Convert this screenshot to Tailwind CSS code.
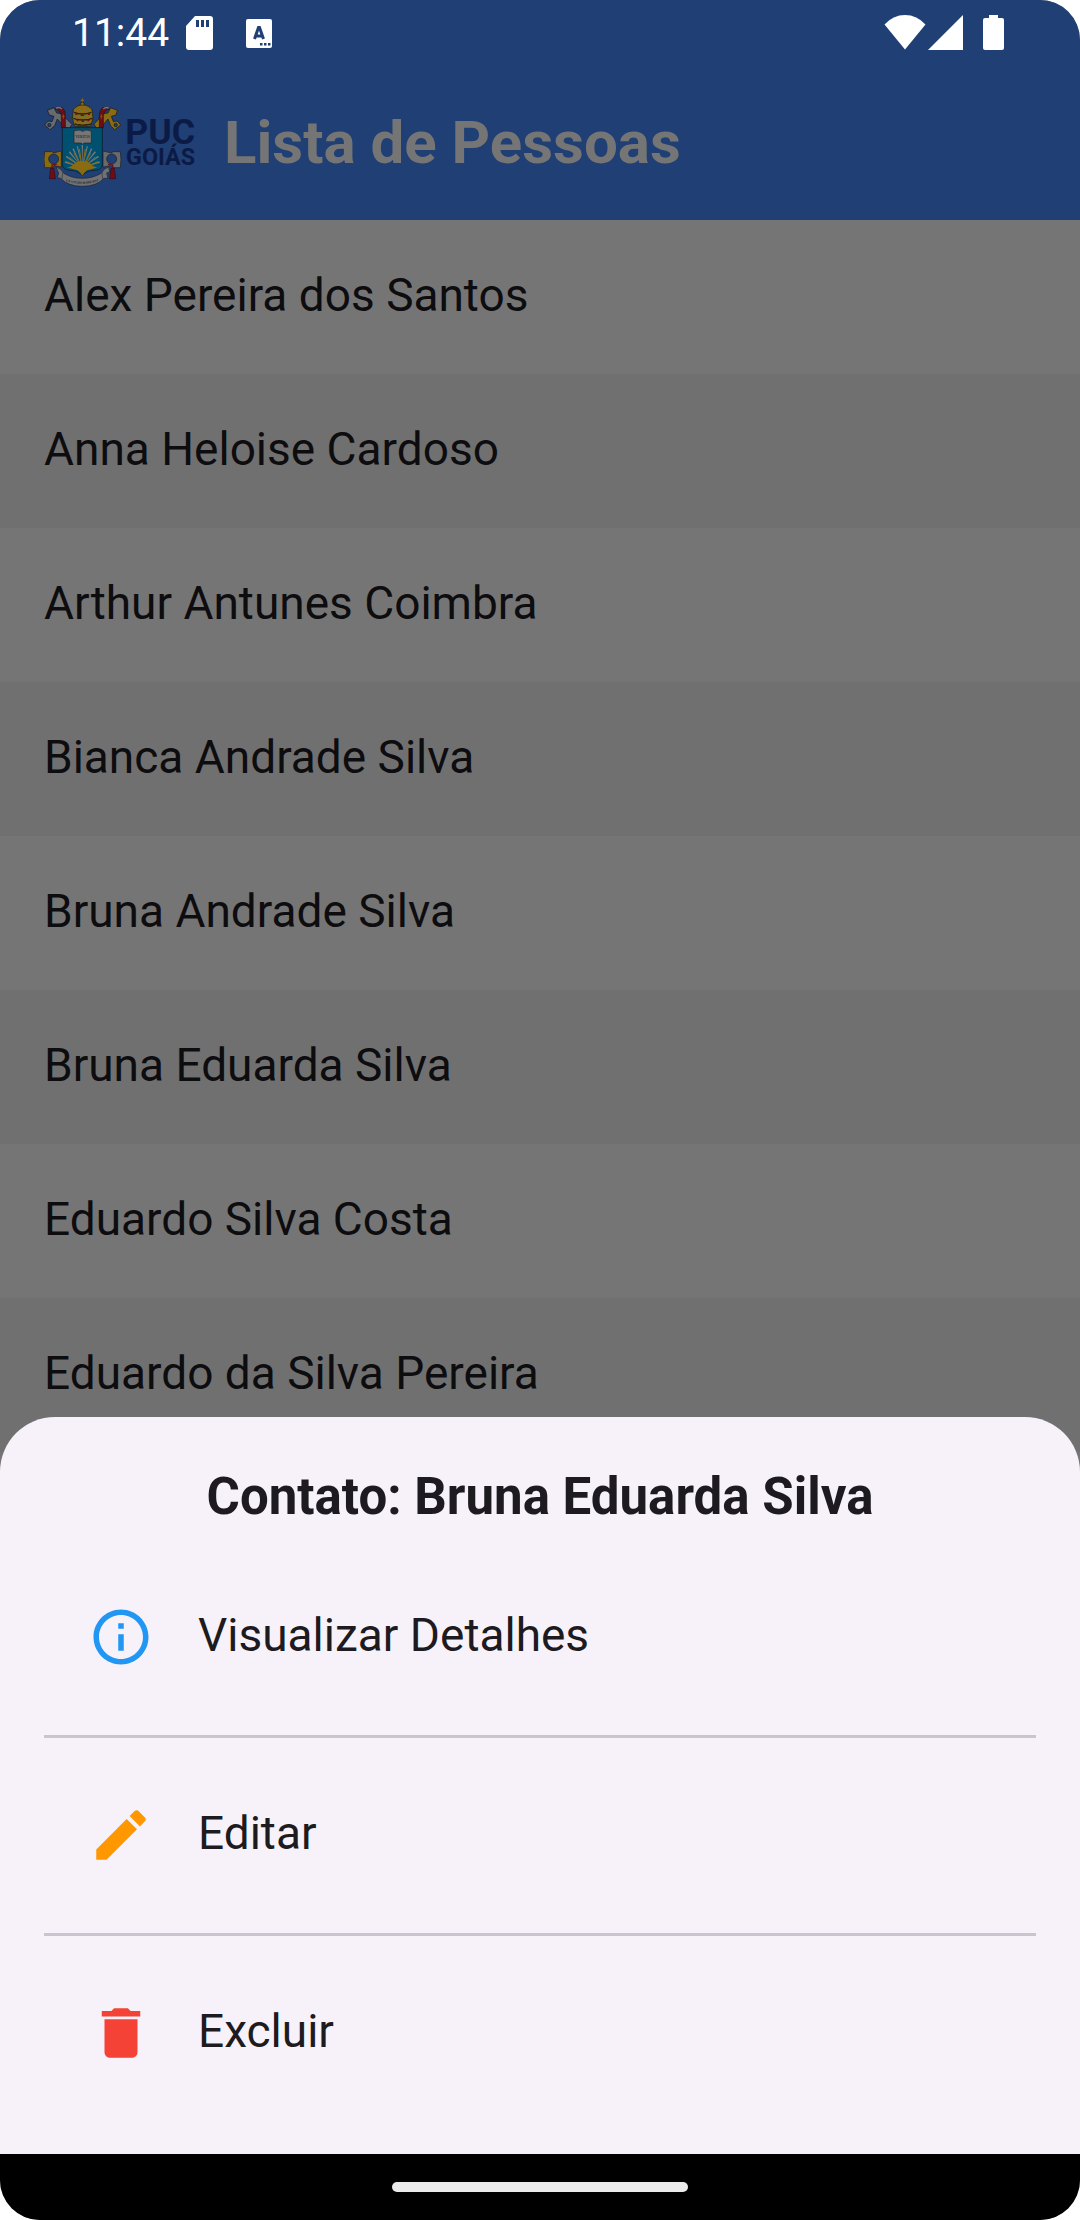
<!DOCTYPE html>
<html lang="pt-BR">
<head>
<meta charset="utf-8">
<meta name="viewport" content="width=device-width, initial-scale=1">
<title>Lista de Pessoas</title>
<script src="https://cdn.jsdelivr.net/npm/@tailwindcss/browser@4"></script>
</head>
<body class="bg-white font-['Roboto',sans-serif]">
<div class="relative flex min-h-screen flex-col overflow-hidden rounded-[40px] bg-[#757575]">

  <header class="bg-[#1f3f75]">
    <!-- Status bar -->
    <div class="flex h-[66px] items-center justify-between pl-[72px] pr-[76px] text-white">
      <div class="flex items-center">
        <time class="text-[39px] leading-none">11:44</time>
        <svg class="ml-4 h-9 w-7" viewBox="0 0 28 36" fill="currentColor" aria-hidden="true"><path fill-rule="evenodd" d="M10 1H25Q28 1 28 4V32Q28 35 25 35H4Q1 35 1 32V11ZM11 5V12H14V5ZM16 5V12H19V5ZM21 5V12H24V5Z"/></svg>
        <svg class="ml-8 h-9 w-7" viewBox="0 0 28 36" aria-hidden="true"><rect x="1" y="4" width="26" height="29" rx="2" fill="currentColor"/><path d="M9.500 24L13.500 12.500H14.500L18.500 24M11 21H17" fill="none" stroke="#1f3f75" stroke-width="3"/><path d="M15 28h2.500v2.500H15zM19 28h2.500v2.500H19zM23 28h2.500v2.500H23z" fill="#1f3f75"/></svg>
      </div>
      <div class="flex items-center">
        <svg class="h-9 w-[42px]" viewBox="0 0 42 36" fill="currentColor" aria-hidden="true"><path d="M21 34.500L.5 9.500Q9 0 21 0T41.500 9.500Z"/></svg>
        <svg class="ml-0.5 h-9 w-[35px]" viewBox="0 0 35 36" fill="currentColor" aria-hidden="true"><path d="M0 35L35 0V35Z"/></svg>
        <svg class="ml-5 h-9 w-[21px]" viewBox="0 0 21 36" fill="currentColor" aria-hidden="true"><path d="M6 0H15V3H19Q21 3 21 5V33Q21 35 19 35H2Q0 35 0 33V5Q0 3 2 3H6Z"/></svg>
      </div>
    </div>

    <!-- App bar -->
    <div class="flex h-[154px] items-center gap-7 px-11">
      <svg class="h-[90px] w-[152px] shrink-0" viewBox="42 39 456 270" role="img" aria-label="PUC Goiás">
        <!-- Crossed keys -->
        <g stroke="#171717" stroke-width="2">
          <path d="M52 76L72 68L80 84L94 86L126 118L118 130L104 126L82 102L74 122L60 134L44 120L54 108L66 110L72 94L58 90Z" fill="#686a6d"/>
          <path d="M262 76L242 68L234 84L220 86L192 118L200 130L214 126L234 102L242 122L254 134L272 120L262 108L250 110L244 94L258 90Z" fill="#8b6b12"/>
          <circle cx="58" cy="120" r="5" fill="#1f3f75"/><circle cx="257" cy="120" r="5" fill="#1f3f75"/>
        </g>
        <!-- Ribbons -->
        <path d="M76 72Q86 62 97 68Q106 74 106 92V128H94V92Q92 78 76 72Z" fill="#6e0d16" stroke="#16191d" stroke-width="2"/>
        <path d="M238 72Q230 62 218 68Q208 74 208 92V128H220V92Q222 78 238 72Z" fill="#6e0d16" stroke="#16191d" stroke-width="2"/>
        <path d="M78 70Q88 64 96 72M236 70Q228 64 220 72" fill="none" stroke="#777" stroke-width="4"/>
        <path d="M100 88v14M96 94h8M214 88v14M210 94h8" stroke="#8b6b12" stroke-width="2"/>
        <!-- Tiara -->
        <path d="M157 40V56M152 46H162" stroke="#8b6b12" stroke-width="3"/>
        <circle cx="157" cy="58" r="6" fill="#8b6b12" stroke="#20180a" stroke-width="2"/>
        <path d="M130 74Q140 60 158 60T186 74L189 100L182 124H134L127 100Z" fill="#8b6b12" stroke="#20180a" stroke-width="2"/>
        <path d="M132 82Q158 92 184 82M130 100Q158 110 188 100M134 117Q158 124 183 117" fill="none" stroke="#2b2009" stroke-width="4"/>
        <path d="M134 75l6 5 7-8 9 9 9-9 7 8 8-5M132 94l8 6 8-8 9 9 9-9 8 8 10-6M136 112l8 5 8-7 6 7 8-7 7 7 8-5" fill="none" stroke="#777149" stroke-width="3"/>
        <path d="M136 88h6M152 91h10M174 88h6M140 107h5M155 109h7M172 107h6" stroke="#6e0d16" stroke-width="4"/>
        <!-- Side rings -->
        <g stroke="#20201d" stroke-width="2">
          <path d="M44 200H66L70 204L94 198V246L72 242L68 248H44L42 224Z" fill="#8b6b12"/>
          <path d="M271 200H249L245 204L219 198V246L243 242L247 248H271L273 224Z" fill="#686a6d"/>
          <circle cx="71" cy="222" r="15" fill="#1f3f75"/><circle cx="245" cy="222" r="15" fill="#1f3f75"/>
        </g>
        <!-- Shield -->
        <path d="M97 128H217V240Q215 254 196 256Q169 256 157 272Q145 256 118 256Q99 254 97 240Z" fill="#00506f" stroke="#0c1822" stroke-width="2"/>
        <!-- Rays -->
        <path d="M157 248L155 180L159 180ZM157 248L140 184L144 184ZM157 248L170 184L174 184ZM157 248L127 192L131 190ZM157 248L183 190L187 192ZM157 248L116 202L120 199ZM157 248L194 199L198 202ZM157 248L107 216L110 212ZM157 248L204 212L207 216ZM157 248L104 233L106 229ZM157 248L208 229L210 233Z" fill="#777"/>
        <path d="M157 250L148 192M157 250L166 192M157 250L132 204M157 250L182 204M157 250L118 216M157 250L196 216M157 250L110 230M157 250L204 230" stroke="#8b6b12" stroke-width="3"/>
        <path d="M111 247Q124 246 128 240Q140 228 157 228T186 240Q190 246 203 247Q181 254 171 256Q162 263 157 272Q152 263 143 256Q133 254 111 247Z" fill="#8b6b12"/>
        <!-- Book -->
        <path d="M132 138Q148 132 158 139Q168 132 184 138V174H162L158 178L154 174H132Z" fill="#747678" stroke="#222" stroke-width="2"/>
        <text x="158" y="158" text-anchor="middle" font-family="Liberation Serif, serif" font-size="10" font-weight="700" fill="#303030">VERITAS</text>
        <!-- Banner and tassels -->
        <path d="M78 246Q94 250 100 264Q124 280 157 280T215 264Q220 250 236 246L239 260L230 264L234 280L222 280Q200 304 157 304T92 280L82 278L86 264Z" fill="#707174" stroke="#20252b" stroke-width="2"/>
        <path d="M98 264L96 282M216 264L218 282" stroke="#333" stroke-width="2"/>
        <path id="motto" d="M106 288Q156 306 208 287" fill="none"/>
        <text font-family="Liberation Serif, serif" font-size="10" font-weight="700" fill="#252525"><textPath href="#motto" startOffset="50%" text-anchor="middle">UT VITAM HABEANT</textPath></text>
        <path d="M80 238L66 240V258M234 238L248 240V258" fill="none" stroke="#6e0d16" stroke-width="4"/>
        <path d="M62 250H72L76 281H58ZM243 250H253L257 281H239Z" fill="#6e0d16" stroke="#330d18" stroke-width="2"/>
        <!-- Wordmark -->
        <g font-family="Roboto, sans-serif" font-weight="700" fill="#0c1b45">
          <text x="286" y="177" font-size="107">PUC</text>
          <text x="288" y="239" font-size="70">GOIÁS</text>
        </g>
      </svg>
      <h1 class="text-[60px] font-bold leading-none text-[#757575]">Lista de Pessoas</h1>
    </div>
  </header>

  <main>
    <ul class="text-[46px] text-[#0d0c0f]">
      <li class="bg-[#757575]"><button class="h-[154px] w-full px-11 pb-1 text-left">Alex Pereira dos Santos</button></li>
      <li class="bg-[#707070]"><button class="h-[154px] w-full px-11 pb-1 text-left">Anna Heloise Cardoso</button></li>
      <li class="bg-[#757575]"><button class="h-[154px] w-full px-11 pb-1 text-left">Arthur Antunes Coimbra</button></li>
      <li class="bg-[#707070]"><button class="h-[154px] w-full px-11 pb-1 text-left">Bianca Andrade Silva</button></li>
      <li class="bg-[#757575]"><button class="h-[154px] w-full px-11 pb-1 text-left">Bruna Andrade Silva</button></li>
      <li class="bg-[#707070]"><button class="h-[154px] w-full px-11 pb-1 text-left">Bruna Eduarda Silva</button></li>
      <li class="bg-[#757575]"><button class="h-[154px] w-full px-11 pb-1 text-left">Eduardo Silva Costa</button></li>
      <li class="bg-[#707070]"><button class="h-[154px] w-full px-11 pb-1 text-left">Eduardo da Silva Pereira</button></li>
    </ul>
  </main>

  <!-- Bottom sheet over the list, with the system navigation bar below it -->
  <div class="absolute inset-x-0 bottom-0">
    <section role="dialog" aria-labelledby="sheet-title" class="rounded-t-[55px] bg-[#f7f2fa] p-11 text-[#1d1b20]">
      <h2 id="sheet-title" class="mb-7 text-center text-[51px] font-bold leading-[71px]">Contato: Bruna Eduarda Silva</h2>
      <button class="flex h-[154px] w-full items-center gap-11 px-11 text-left text-[46px]">
        <svg class="size-[66px] shrink-0 text-[#2196f3]" viewBox="0 0 24 24" fill="currentColor" aria-hidden="true"><path d="M11 7h2v2h-2zm0 4h2v6h-2zm1-9C6.480 2 2 6.480 2 12s4.480 10 10 10 10-4.480 10-10S17.520 2 12 2zm0 18c-4.410 0-8-3.590-8-8s3.590-8 8-8 8 3.590 8 8-3.590 8-8 8z"/></svg>
        <span class="pb-1">Visualizar Detalhes</span>
      </button>
      <div class="flex h-11 items-center"><hr class="h-[3px] w-full border-0 bg-[#cac4d0]"></div>
      <button class="flex h-[154px] w-full items-center gap-11 px-11 text-left text-[46px]">
        <svg class="size-[66px] shrink-0 text-[#ff9800]" viewBox="0 0 24 24" fill="currentColor" aria-hidden="true"><path d="M3 17.250V21h3.750L17.810 9.940l-3.750-3.750L3 17.250zM20.710 7.040c.39-.39.39-1.020 0-1.410l-2.340-2.340c-.39-.39-1.020-.39-1.410 0l-1.830 1.830 3.750 3.750 1.830-1.830z"/></svg>
        <span class="pb-1">Editar</span>
      </button>
      <div class="flex h-11 items-center"><hr class="h-[3px] w-full border-0 bg-[#cac4d0]"></div>
      <button class="flex h-[154px] w-full items-center gap-11 px-11 text-left text-[46px]">
        <svg class="size-[66px] shrink-0 text-[#f44336]" viewBox="0 0 24 24" fill="currentColor" aria-hidden="true"><path d="M6 19c0 1.100.9 2 2 2h8c1.100 0 2-.9 2-2V7H6v12zM19 4h-3.500l-1-1h-5l-1 1H5v2h14V4z"/></svg>
        <span class="pb-1">Excluir</span>
      </button>
    </section>
    <div class="flex h-[66px] items-center justify-center bg-black"><div class="h-2.5 w-[296px] rounded-[5px] bg-[#ebebeb]"></div></div>
  </div>
</div>
</body>
</html>
